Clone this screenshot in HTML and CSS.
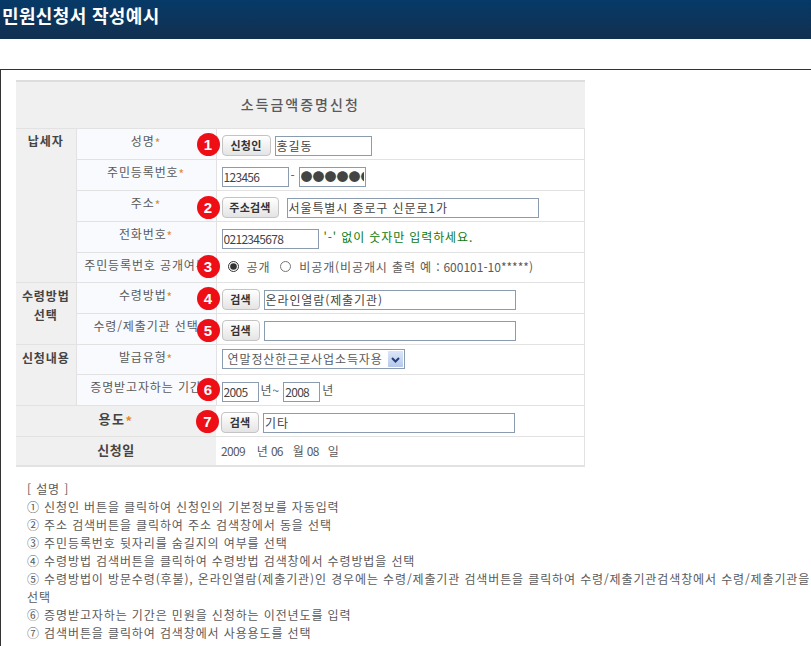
FILE: index.html
```html
<!DOCTYPE html>
<html lang="ko">
<head>
<meta charset="utf-8">
<title>민원신청서 작성예시</title>
<link rel="stylesheet" href="styles.css">
</head>
<body>
<header class="top"><h1>민원신청서 작성예시</h1></header>
<main class="frame">
<table class="form">
<colgroup><col class="c1"><col class="c2"><col class="c3"></colgroup>
<tr class="head"><th colspan="3">소득금액증명신청</th></tr>
<tr>
  <th rowspan="5" class="group first">납세자</th>
  <td class="label">성명<i>*</i></td>
  <td class="val"><span class="badge">1</span><button class="btn w49">신청인</button><input class="inp w97 ml4" value="홍길동"></td>
</tr>
<tr>
  <td class="label">주민등록번호<i>*</i></td>
  <td class="val"><input class="inp num w67" value="123456"><span class="dash">-</span><input class="inp pw" value="●●●●●●●"></td>
</tr>
<tr>
  <td class="label">주소<i>*</i></td>
  <td class="val"><span class="badge b2">2</span><button class="btn w57">주소검색</button><input class="inp w252 ml8" value="서울특별시 종로구 신문로1가"></td>
</tr>
<tr>
  <td class="label">전화번호<i>*</i></td>
  <td class="val"><input class="inp num w97" value="0212345678"><span class="hint">'-' 없이 숫자만 입력하세요.</span></td>
</tr>
<tr class="short">
  <td class="label clip">주민등록번호 공개여부</td>
  <td class="val tight"><span class="badge b3">3</span><label class="radio"><input type="radio" name="open" checked>공개</label><label class="radio"><input type="radio" name="open">비공개(비공개시 출력 예 : <span class="code">600101-10*****)</span></label></td>
</tr>
<tr>
  <th rowspan="2" class="group">수령방법<br>선택</th>
  <td class="label">수령방법<i>*</i></td>
  <td class="val"><span class="badge">4</span><button class="btn w38">검색</button><input class="inp w252 ml4" value="온라인열람(제출기관)"></td>
</tr>
<tr>
  <td class="label clip">수령/제출기관 선택</td>
  <td class="val"><span class="badge b2">5</span><button class="btn w38">검색</button><input class="inp w252 ml4"></td>
</tr>
<tr class="short">
  <th rowspan="2" class="group">신청내용</th>
  <td class="label">발급유형<i>*</i></td>
  <td class="val sel"><div class="select"><select><option>연말정산한근로사업소득자용</option></select><span class="arrow"><svg width="15" height="17" viewBox="0 0 15 17"><path d="M4 7l3.500 3.500L11 7" fill="none" stroke="#24407a" stroke-width="2"/></svg></span></div></td>
</tr>
<tr>
  <td class="label clip">증명받고자하는 기간</td>
  <td class="val"><span class="badge b4">6</span><input class="inp num w37" value="2005"><span class="unit">년~</span><input class="inp num w37" value="2008"><span class="unit">년</span></td>
</tr>
<tr class="gray">
  <th colspan="2" class="use">용도<i>*</i></th>
  <td class="val"><span class="badge">7</span><button class="btn w38">검색</button><input class="inp w252 ml4" value="기타"></td>
</tr>
<tr class="gray short">
  <th colspan="2">신청일</th>
  <td class="val tight"><span class="digits">2009</span><span class="yr">년</span><span class="digits">06</span><span class="mo">월</span><span class="digits">08</span><span class="dy">일</span></td>
</tr>
</table>
<section class="notes">
<p>[ 설명 ]</p>
<p>① 신청인 버튼을 클릭하여 신청인의 기본정보를 자동입력</p>
<p>② 주소 검색버튼을 클릭하여 주소 검색창에서 동을 선택</p>
<p>③ 주민등록번호 뒷자리를 숨길지의 여부를 선택</p>
<p>④ 수령방법 검색버튼을 클릭하여 수령방법 검색창에서 수령방법을 선택</p>
<p>⑤ 수령방법이 방문수령(후불), 온라인열람(제출기관)인 경우에는 수령/제출기관 검색버튼을 클릭하여 수령/제출기관검색창에서 수령/제출기관을<br>선택</p>
<p>⑥ 증명받고자하는 기간은 민원을 신청하는 이전년도를 입력</p>
<p>⑦ 검색버튼을 클릭하여 검색창에서 사용용도를 선택</p>
</section>
</main>
</body>
</html>
```
FILE: styles.css
```css
* { box-sizing: border-box; }
html, body { margin: 0; height: 646px; overflow: hidden; background: #fff; }
body { font: 12px/18px "Noto Sans CJK KR", "Noto Sans", sans-serif; color: #5a5a5a; letter-spacing: 0.88px; }
.top { height: 39px; padding-left: 2px; background: linear-gradient(#063a68, #12304f); }
.top h1 { margin: 0; font-size: 18px; line-height: 30px; font-weight: 700; color: #fff; letter-spacing: 0.35px; }
.frame { margin-top: 30px; height: 577px; border-top: 1px solid #333; border-left: 1px solid #333; padding: 10px 0 0 15px; }
.form { width: 569px; border-collapse: collapse; table-layout: fixed; border-top: 2px solid #ddd; border-bottom: 2px solid #e2e2e2; }
.c1 { width: 60px; }
.c2 { width: 140px; }
.form th, .form td { border: 1px solid #e2e2e2; border-left: 0; border-right: 0; padding: 0; font-weight: 400; height: 31px; }
.form .short th, .form .short td { height: 30px; }
.form td.label { border-left: 1px solid #e2e2e2; border-right: 1px solid #e2e2e2; background: #f8fafd; text-align: center; vertical-align: top; padding-top: 3px; white-space: nowrap; }
.form td.val { position: relative; padding: 6px 0 0 5px; vertical-align: top; white-space: nowrap; background: #fff; border-right: 1px solid #e2e2e2; }
.form td.tight { padding-top: 5px; }
.form td.sel { padding-top: 4px; }
.label i, .gray i { font-style: normal; color: #e08a2c; line-height: 0; vertical-align: -2px; }
.clip { overflow: hidden; }
.head th { height: 47px; background: #f0f0f0; font-size: 14px; font-weight: 500; letter-spacing: 2px; padding-bottom: 2px; }
.form th.group { background: #f0f0f0; vertical-align: top; padding-top: 3px; font-weight: 700; color: #444; line-height: 19px; }
.form th.first { padding-top: 2px; }
.form .gray th { background: #f0f0f0; font-weight: 700; color: #444; font-size: 13px; vertical-align: top; padding-top: 4px; letter-spacing: 0.5px; }
.form .gray .use { letter-spacing: 1.500px; }
.badge { position: absolute; left: -20px; top: 4px; z-index: 1; width: 23px; height: 23px; border-radius: 50%; background: #ee0f16; color: #fff; font: 700 15px/23px "Liberation Sans", sans-serif; letter-spacing: 0; text-align: center; }
.b2 { top: 5px; }
.b3 { top: 2px; }
.b4 { top: 3px; }
.btn { height: 21px; padding: 0; border: 1px solid #c4c4c4; border-radius: 4px; background: linear-gradient(#fff, #e4e4e4); color: #333; font: 700 11px/18px "Noto Sans CJK KR", sans-serif; letter-spacing: 0.2px; vertical-align: top; }
.w49 { width: 49px; }
.w57 { width: 57px; }
.w38 { width: 38px; }
.inp { height: 20px; margin-top: 1px; padding: 0 1px; border: 1px solid #8b9bb0; background: #fff; color: #444; font: 12px/18px "Noto Sans CJK KR", sans-serif; letter-spacing: 0.9px; vertical-align: top; outline: 0; }
.inp.num { letter-spacing: -0.7px; }
.w97 { width: 97px; }
.w67 { width: 67px; }
.w252 { width: 252px; }
.w37 { width: 37px; }
.ml4 { margin-left: 4px; }
.ml8 { margin-left: 8px; }
.pw { width: 67px; font-size: 12px; color: #444; letter-spacing: 0; }
.dash { margin: 0 3px 0 2px; }
.hint { margin-left: 5px; color: #0c7a0c; }
.radio { display: inline-flex; align-items: center; margin-left: 6px; margin-right: 4px; }
.radio input { width: 11px; height: 11px; margin: 0 8px 0 0; accent-color: #333; }
.code { margin-left: 3px; letter-spacing: 0; }
.digits { letter-spacing: -0.7px; }
.select { display: flex; width: 183px; height: 20px; border: 1px solid #8b9bb0; align-items: center; }
.select select { flex: 1; min-width: 0; height: 18px; padding: 0 0 0 5px; border: 0; background: #fff; color: #5a5a5a; font: 12px/18px "Noto Sans CJK KR", sans-serif; letter-spacing: 0.9px; appearance: none; outline: 0; }
.arrow { width: 15px; height: 16px; margin-right: 1px; background: linear-gradient(#dce6f8, #b6c8ec); display: flex; }
.unit { margin: 0 3px 0 2px; letter-spacing: 1px; }
.yr { margin: 0 3px 0 12px; letter-spacing: 0; }
.mo { margin: 0 3px 0 10px; letter-spacing: 0; }
.dy { margin-left: 9px; letter-spacing: 0; }
.notes { margin: 13px 0 0 11px; white-space: nowrap; }
.notes p { margin: 0; }
```
